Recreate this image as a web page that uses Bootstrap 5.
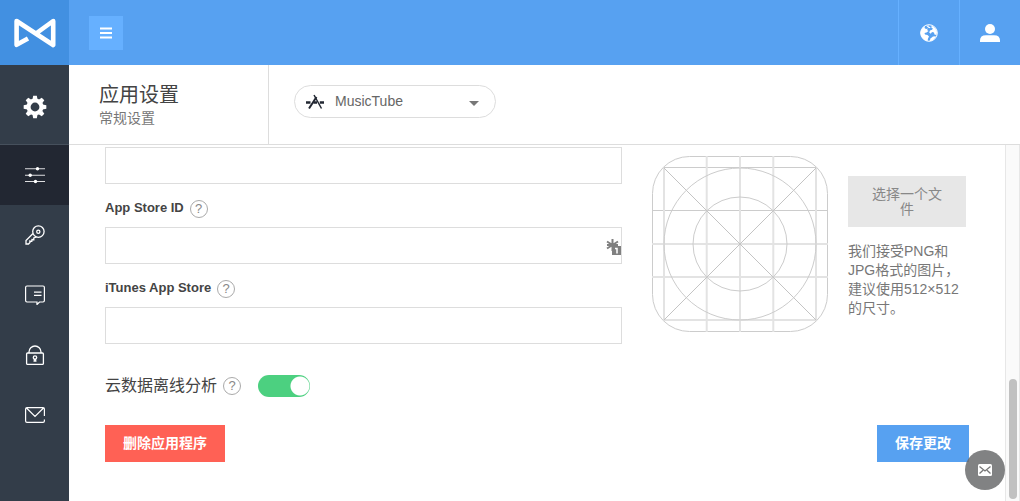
<!DOCTYPE html>
<html lang="zh-CN">
<head>
<meta charset="utf-8">
<meta name="viewport" content="width=device-width, initial-scale=1">
<title>应用设置</title>
<link rel="stylesheet" href="https://cdn.jsdelivr.net/npm/bootstrap@5.3.0/dist/css/bootstrap.min.css">
<style>
  body { font-family: "Liberation Sans", "Noto Sans CJK SC", sans-serif; font-size: 14px; line-height: 20px; color: #444; }
  svg { display: block; }
  .side-nav { width: 69px; background: #333d49; }
  .side-nav a { height: 60px; color: #fff; }
  .side-nav .brand-link { height: 65px; background: #4290e1; }
  .side-nav .main-link { height: 80px; border-bottom: 1px solid #46505c; }
  .side-nav .current { background: #222732; }
  .top-bar { height: 65px; background: #57a1f1; padding-left: 20px; }
  .menu-btn { width: 34px; height: 34px; background: #66b0ff; color: #fff; }
  .top-link { width: 61px; color: #fff; border-left: 1px solid #66b0ff; }
  .title-bar { height: 80px; border-bottom: 1px solid #ddd; }
  .title-box { width: 200px; padding: 16px 0 0 30px; border-right: 1px solid #ddd; }
  .title-box h1 { font-size: 20px; line-height: 28px; font-weight: 400; margin: 0; }
  .title-box p { line-height: 18px; color: #777; margin: 0; }
  .app-picker { width: 202px; margin: 20px 0 0 25px; }
  .app-picker .form-select { height: 33px; padding: 0 40px; font-size: 14px; color: #666; border-color: #ddd; background-image: none; }
  .app-mark { left: 12px; top: 8px; color: #222732; pointer-events: none; }
  .app-caret { right: 17px; top: 16px; pointer-events: none; border: 5px solid transparent; border-top-color: #777; border-bottom: 0; }
  .settings { padding: 2px 36px 0; }
  .settings .form-control { height: 37px; border-color: #ddd; padding: 0 12px; font-size: 14px; }
  .field-row { height: 43px; padding-top: 6px; }
  .field-row label { font-size: 13px; font-weight: 700; line-height: 18px; color: #444; padding-bottom: 2px; }
  .help-btn { width: 18px; height: 18px; border: 1px solid #aaa; color: #888; font-size: 13px; line-height: 16px; margin-left: 6px; background: #fff; }
  .key-mark { right: 0; top: 12px; }
  .image-pane { width: 347px; padding: 9px 0 0 30px; gap: 20px; }
  .file-pane { width: 118px; padding-top: 20px; color: #777; }
  .file-btn { background: #e7e7e7; color: #888; font-size: 14px; line-height: 15px; padding: 11px 20px 10px; }
  .file-pane p { line-height: 19px; margin: 15px 0 0; }
  .switch-row { margin-top: 30px; height: 24px; }
  .switch-row label { font-size: 16px; }
  .switch-row .form-check { padding-top: 1px; }
  .switch-row .form-check-input { width: 52px; height: 22px; margin: 0 0 0 17px; border: 0; background-color: #4cd080;
    background-image: radial-gradient(circle, #fff 9px, transparent 10px); background-size: 20px 20px; background-position: right 1px center; }
  .action-row { margin-top: 27px; }
  .action-btn { height: 37px; padding: 0 18px; font-size: 14px; font-weight: 700; color: #fff; }
  .delete-btn { background: #ff6155; }
  .save-btn { background: #57a1f1; }
  .scroll-track { width: 15px; background: #fafafa; border: solid #e7e7e7; border-width: 0 1px; padding: 0 3px 2px; }
  .scroll-thumb { height: 120px; width: 8px; background: #c1c1c1; }
  .chat-btn { width: 40px; height: 40px; right: 15px; bottom: 11px; background: rgba(107,108,109,.85); color: #fff; }
</style>
</head>
<body class="bg-white">
<div class="d-flex vh-100 overflow-hidden">
  <nav class="side-nav d-flex flex-column flex-shrink-0" aria-label="主菜单">
    <a class="brand-link d-flex align-items-center justify-content-center" href="#" aria-label="首页">
      <svg width="42" height="30" viewBox="0 0 42 30" fill="none" stroke="currentColor" stroke-width="4.600" stroke-linejoin="round"><path d="M14 20.500L2.600 26.800V3L39.200 27V3L22 15.500"/></svg>
    </a>
    <a class="main-link d-flex align-items-center justify-content-center pt-1" href="#" aria-label="设置">
      <svg width="24" height="24" viewBox="-12.500 -12.500 25 25"><g fill="currentColor"><path fill-rule="evenodd" d="M0-8.800A8.800 8.800 0 1 0 0 8.800A8.800 8.800 0 1 0 0-8.800ZM0-4.600A4.600 4.600 0 1 1 0 4.600A4.600 4.600 0 1 1 0-4.600Z"/><g id="teeth"><path d="M-2.600-8L-1.900-11.800H1.900L2.600-8ZM-2.600 8L-1.900 11.800H1.900L2.600 8ZM-8-2.600L-11.800-1.900V1.900L-8 2.600ZM8-2.600L11.800-1.900V1.900L8 2.600Z"/></g><use href="#teeth" transform="rotate(45)"/></g></svg>
    </a>
    <a class="current d-flex align-items-center justify-content-center" href="#" aria-label="常规设置">
      <svg width="20" height="20" viewBox="0 0 20 20" stroke="currentColor"><path d="M0 3.800H20M0 10.200H20M0 16.500H20" stroke-width="1.100" opacity=".85"/><g fill="currentColor" stroke="none"><circle cx="12.500" cy="3.800" r="1.700"/><circle cx="5.200" cy="10.200" r="1.700"/><circle cx="10.500" cy="16.500" r="1.700"/></g></svg>
    </a>
    <a class="d-flex align-items-center justify-content-center" href="#" aria-label="密钥">
      <svg width="20" height="20" viewBox="0 0 20 20" fill="none" stroke="currentColor" stroke-width="1.300"><circle cx="13.400" cy="6.600" r="5.700"/><circle cx="13.300" cy="6.700" r="1.600"/><path d="M8 8.500L1 15.500V19H3.500L5 17.500L4.800 16L6.800 16.300L7 14.500L8.800 14.700L8.800 13L11.500 12"/></svg>
    </a>
    <a class="d-flex align-items-center justify-content-center" href="#" aria-label="消息">
      <svg width="20" height="20" viewBox="0 0 20 20" fill="none" stroke="currentColor" stroke-width="1.200"><path d="M2 1H18Q19.400 1 19.400 2.400V15.600Q19.400 17 18 17H14.500L12 19.500V17H2Q.6 17 .6 15.600V2.400Q.6 1 2 1ZM9 7.200H16.500M9 10.300H16.500"/></svg>
    </a>
    <a class="d-flex align-items-center justify-content-center" href="#" aria-label="安全">
      <svg width="20" height="20" viewBox="0 0 20 20" fill="none" stroke="currentColor" stroke-width="1.300"><rect x="1.600" y="8" width="16.800" height="11.400" rx="1"/><path d="M4 8V7A6 6 0 0 1 16 7V8"/><circle cx="10" cy="12.500" r="1.700"/><path d="M9.500 14L9.200 16H10.800L10.500 14"/></svg>
    </a>
    <a class="d-flex align-items-center justify-content-center" href="#" aria-label="邮件">
      <svg width="20" height="16" viewBox="0 0 20 16" fill="none" stroke="currentColor" stroke-width="1.200"><path d="M19.400 9V2Q19.400.6 18 .6H2Q.6.6.6 2V14Q.6 15.400 2 15.400H18Q19.400 15.400 19.400 14V12.500M1.500 1L10 9.500L18.500 1"/></svg>
    </a>
  </nav>

  <div class="d-flex flex-column flex-grow-1 overflow-hidden">
    <header class="top-bar d-flex flex-shrink-0 align-items-stretch">
      <button type="button" class="menu-btn btn rounded-0 border-0 p-0 d-flex align-items-center justify-content-center align-self-center me-auto" aria-label="菜单">
        <svg width="12" height="12" viewBox="0 0 12 12" stroke="currentColor" stroke-width="2"><path d="M0 1.500H12M0 6H12M0 10.500H12"/></svg>
      </button>
      <a class="top-link d-flex align-items-center justify-content-center" href="#" aria-label="语言">
        <svg width="18" height="18" viewBox="0 0 18 18"><circle cx="9" cy="9" r="8.300" fill="#57a1f1" stroke="#fff"/><g fill="#fff"><path d="M.8 7Q2 3.500 5 2L4.500 4L6 5L8 4.500L7 6L8.500 7L6.500 8.500L4.500 9L5 10.500L7.500 11L9 12.500L8 14.500L7.500 17.200A8.500 8.500 0 0 1 .8 7Z"/><path d="M6.500 2L9 1.500L8.500 2.800L10.500 3L10 4.300L8.300 3.800ZM11.500 1.500Q16 3.500 17 8L16.500 11L14.500 10.500L14 8.500L12 8L10.800 9.800L9.200 8.500L10 6.500L12 5.800L13 4.500L11.500 4Z"/><path d="M9.500 17.200L10.500 14.500L13 12.500L16 12.200Q14 16.800 9.500 17.200Z"/></g></svg>
      </a>
      <a class="top-link d-flex align-items-center justify-content-center" href="#" aria-label="用户">
        <svg width="20" height="18" viewBox="0 0 20 18" fill="currentColor"><circle cx="10" cy="5" r="5"/><path d="M0 18V16.500Q0 11.300 6 11.300H14Q20 11.300 20 16.500V18Z"/></svg>
      </a>
    </header>

    <div class="title-bar d-flex flex-shrink-0">
      <div class="title-box">
        <h1>应用设置</h1>
        <p>常规设置</p>
      </div>
      <div class="app-picker position-relative">
        <select class="form-select rounded-pill" aria-label="应用程序"><option>MusicTube</option></select>
        <svg class="app-mark position-absolute" width="18" height="17" viewBox="0 0 18 17" fill="none" stroke="currentColor"><path d="M8 2L15.500 15.500" stroke-width="1.500"/><path d="M10.500 4L3 15.500" stroke-width="2"/><path d="M0 9.500H4.500M7.500 9.500H11M13.800 9.500H18" stroke-width="2.400"/></svg>
        <span class="app-caret position-absolute"></span>
      </div>
    </div>

    <div class="d-flex flex-grow-1 overflow-hidden">
      <main class="settings flex-grow-1 overflow-hidden">
        <form>
          <div class="d-flex">
            <div class="flex-grow-1">
              <input type="text" class="form-control rounded-0" aria-label="应用链接">
              <div class="field-row d-flex align-items-center">
                <label for="storeId">App Store ID</label>
                <button type="button" class="help-btn rounded-circle p-0" aria-label="帮助">?</button>
              </div>
              <div class="position-relative">
                <input type="text" id="storeId" class="form-control rounded-0">
                <svg class="key-mark position-absolute" width="16" height="17" viewBox="0 0 16 17"><path d="M6.500 0V12M1 2.500L12 9.500M12 2.500L1 9.500M1 6H12" stroke="#808080" stroke-width="2"/><rect x="6" y="7" width="9" height="9" fill="#808080"/><path d="M9 9.500H11V14.500" fill="none" stroke="#fff" stroke-width="1.500"/></svg>
              </div>
              <div class="field-row d-flex align-items-center">
                <label for="itunes">iTunes App Store</label>
                <button type="button" class="help-btn rounded-circle p-0" aria-label="帮助">?</button>
              </div>
              <input type="text" id="itunes" class="form-control rounded-0">
            </div>
            <div class="image-pane d-flex flex-shrink-0 align-items-start">
              <svg class="flex-shrink-0" width="176" height="176" viewBox="0 0 176 176" fill="none" stroke="#ccc">
                <rect x=".5" y=".5" width="175" height="175" rx="37"/>
                <path d="M12 11.500H164M0 54.500H176"/>
                <path d="M0 88H176M0 121H176M12 164H164M12 12V164M54.700 0V176M88 0V176M121.300 0V176M164 12V164" stroke="#e3e3e3" stroke-width="2"/>
                <path d="M12 12L164 164M164 12L12 164" stroke="#c4c4c4"/>
                <circle cx="88" cy="88" r="76"/><circle cx="88" cy="88" r="47"/>
              </svg>
              <div class="file-pane">
                <button type="button" class="file-btn btn w-100 border-0 rounded-0">选择一个文件</button>
                <p>我们接受PNG和JPG格式的图片，建议使用512×512的尺寸。</p>
              </div>
            </div>
          </div>
          <div class="switch-row d-flex align-items-center">
            <label for="offline">云数据离线分析</label>
            <button type="button" class="help-btn rounded-circle p-0" aria-label="帮助">?</button>
            <div class="form-check form-switch ps-0 m-0 d-flex"><input class="form-check-input float-none" type="checkbox" role="switch" id="offline" checked></div>
          </div>
          <div class="action-row d-flex justify-content-between">
            <button type="button" class="action-btn delete-btn btn rounded-0 border-0">删除应用程序</button>
            <button type="submit" class="action-btn save-btn btn rounded-0 border-0">保存更改</button>
          </div>
        </form>
      </main>
      <div class="scroll-track d-flex flex-column justify-content-end flex-shrink-0" aria-hidden="true"><div class="scroll-thumb rounded-pill"></div></div>
    </div>
  </div>
</div>
<button type="button" class="chat-btn btn rounded-circle border-0 p-0 position-fixed d-flex align-items-center justify-content-center" aria-label="联系我们">
  <svg width="14" height="12" viewBox="0 0 14 12"><rect width="14" height="12" rx="1.500" fill="#fff"/><path d="M1.500 2.500L7 7L12.500 2.500M1.500 9.500L5 6.300M12.500 9.500L9 6.300" fill="none" stroke="#777" stroke-width="1.300"/></svg>
</button>
<script src="https://cdn.jsdelivr.net/npm/bootstrap@5.3.0/dist/js/bootstrap.bundle.min.js"></script>
</body>
</html>
